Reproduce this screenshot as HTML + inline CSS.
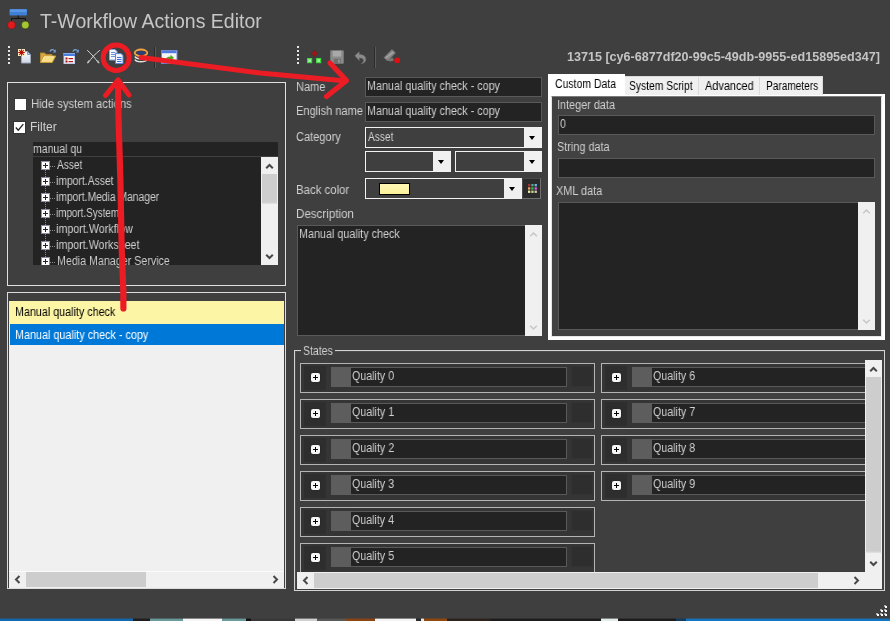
<!DOCTYPE html>
<html>
<head>
<meta charset="utf-8">
<title>T-Workflow Actions Editor</title>
<style>
html,body{margin:0;padding:0;}
body{width:890px;height:621px;overflow:hidden;background:#3f3f3f;font-family:"Liberation Sans",sans-serif;font-size:12px;color:#d0d0d0;position:relative;}
.a{position:absolute;box-sizing:border-box;}
.t{position:absolute;white-space:pre;line-height:14px;height:14px;transform-origin:0 0;will-change:transform;}
.inp{position:absolute;box-sizing:border-box;background:#232323;border:1px solid #595959;}
.cmb{position:absolute;box-sizing:border-box;background:#3f3f3f;border:1px solid #f2f2f2;}
.cmb .btn{position:absolute;right:0;top:0;bottom:0;width:17px;background:#f0f0f0;}
.cmb .btn:after{content:"";position:absolute;left:5px;top:8px;border-left:3.5px solid transparent;border-right:3.5px solid transparent;border-top:4px solid #000;}
.sb{position:absolute;box-sizing:border-box;background:#f0f0f0;}
.grip{width:2px;height:18px;background:repeating-linear-gradient(to bottom,#e6e6e6 0,#e6e6e6 2px,transparent 2px,transparent 4px);}
.st{position:absolute;box-sizing:border-box;border:1px solid #b4b4b4;height:30px;background:#353535;}
.st .pl{position:absolute;left:10px;top:9px;width:9px;height:9px;background:#f6f6f6;border-radius:2px;box-shadow:0 0 2px #222;}
.st .pl:before{content:"";position:absolute;left:2px;top:4px;width:5px;height:1px;background:#000;}
.st .pl:after{content:"";position:absolute;left:4px;top:2px;width:1px;height:5px;background:#000;}
.st:before{content:"";position:absolute;left:3px;top:2px;width:22px;height:24px;background:#2e2e2e;}
.st .sw{position:absolute;left:30px;top:3px;width:20px;height:20px;background:#5d5d5d;}
.st .tx{position:absolute;left:50px;top:3px;width:216px;height:20px;box-sizing:border-box;background:#232323;border:1px solid #595959;border-left:none;}
.st .dk{position:absolute;left:271px;top:3px;width:20px;height:19px;background:#2e2e2e;box-shadow:0 0 1px #2e2e2e;}
.tab{position:absolute;box-sizing:border-box;top:76px;height:19px;background:#f0f0f0;border:1px solid #dadada;border-bottom:none;}
.tr{position:absolute;left:0;height:16px;}
.tr .pm{position:absolute;left:8px;top:4px;width:9px;height:9px;box-sizing:border-box;background:#fff;border:1px solid #8a8fa6;}
.tr .pm:before{content:"";position:absolute;left:1px;top:3px;width:5px;height:1px;background:#223;}
.tr .pm:after{content:"";position:absolute;left:3px;top:1px;width:1px;height:5px;background:#223;}
.tr .dt{position:absolute;left:17px;top:9px;width:5px;height:1px;background:repeating-linear-gradient(to right,#8a8a8a 0,#8a8a8a 1px,transparent 1px,transparent 2px);}
</style>
</head>
<body>

<svg class="a" style="left:6px;top:6px" width="26" height="26" viewBox="0 0 26 26">
 <rect x="3.5" y="3" width="17.5" height="6.5" rx="1" fill="#3f7fd6"/>
 <rect x="4" y="3.5" width="16.500" height="2.500" fill="#5a97e6"/>
 <path d="M12.200 9.500v3M5.500 15v-2.500h14v2.500" stroke="#111" stroke-width="1" fill="none"/>
 <circle cx="5.500" cy="19" r="4" fill="#e01b1b" stroke="#5a1a1a" stroke-width="0.500"/>
 <circle cx="19.300" cy="19" r="4" fill="#a4c832" stroke="#2c3410" stroke-width="0.700"/>
</svg>
<div class="t" id="title" style="left:40px;top:9px;font-size:19.500px;line-height:24px;height:24px;color:#c6c6c6;">T-Workflow Actions Editor</div>
<!-- left toolbar -->
<div class="a grip" style="left:8px;top:46px;"></div>
<svg class="a" id="ic1" style="left:17px;top:48px" width="16" height="16" viewBox="0 0 16 16">
 <defs><linearGradient id="g1" x1="0" y1="0" x2="0" y2="1"><stop offset="0" stop-color="#ffffff"/><stop offset="1" stop-color="#cfd6e6"/></linearGradient></defs>
 <path d="M4.500 3.500h6l3 3v8.500h-9z" fill="url(#g1)" stroke="#9ea6b8" stroke-width="1"/>
 <path d="M10.500 3.500v3h3z" fill="#c9d6f2" stroke="#7f95c8" stroke-width="1"/>
 <rect x="1" y="1" width="7" height="7" fill="#fff0c4"/>
 <path d="M4.500 1.200v6.600M1.200 4.500h6.600M2.200 2.200l4.600 4.600M6.800 2.200l-4.600 4.600" stroke="#c41212" stroke-width="1.100"/>
 <circle cx="4.500" cy="4.500" r="1.600" fill="#b00c0c"/>
</svg>
<svg class="a" id="ic2" style="left:40px;top:48px" width="17" height="16" viewBox="0 0 17 16">
 <path d="M0.500 14.500v-9.500h4l1.500 1.500h6v8z" fill="#d6a842" stroke="#b58a2e"/>
 <path d="M0.700 14.500l3-6.500h12l-3.500 6.500z" fill="#f8dc84" stroke="#c99d36"/>
 <path d="M2 13.500l2.300-4.700h9.500" fill="none" stroke="#fff0b8" stroke-width="0.800"/>
 <path d="M9.800 3.500c1.400-2.300 3.600-2.300 5-0.500" stroke="#7fa6dc" stroke-width="1.200" fill="none"/>
 <path d="M15.800 1.200v3.200h-3z" fill="#6f9ad8"/>
</svg>
<svg class="a" id="ic3" style="left:63px;top:48px" width="17" height="16" viewBox="0 0 17 16">
 <rect x="1" y="5.500" width="10.500" height="10" fill="#fdf6f4" stroke="#c3cdea"/>
 <rect x="0.500" y="5" width="11.500" height="3" fill="#4a7fe0"/>
 <rect x="0.500" y="5" width="11.500" height="1" fill="#86a9ee"/>
 <rect x="2.500" y="9.500" width="2" height="2" fill="#a01010"/><rect x="5.500" y="10" width="4.500" height="1.200" fill="#b01818"/>
 <rect x="2.500" y="12.500" width="2" height="2" fill="#a01010"/><rect x="5.500" y="13" width="4.500" height="1.200" fill="#b01818"/>
 <path d="M9.800 3.500c1.400-2.300 3.600-2.300 5-0.500" stroke="#7fa6dc" stroke-width="1.200" fill="none"/>
 <path d="M15.800 1.200v3.200h-3z" fill="#6f9ad8"/>
</svg>
<svg class="a" id="ic4" style="left:86px;top:49px" width="16" height="16" viewBox="0 0 16 16">
 <path d="M1.500 1.500c3.500 3 7.500 7.500 11 12.500M13.500 1.500c-4 3-8 7.500-11.500 12.500" stroke="#d6d6d6" stroke-width="1" fill="none" stroke-linecap="round"/>
 <path d="M1.500 14l1.500-2.500M13 14l-1.500-2.500" stroke="#bdbdbd" stroke-width="1.400" fill="none"/>
</svg>
<svg class="a" id="ic5" style="left:108px;top:49px" width="17" height="16" viewBox="0 0 17 16">
 <path d="M1.500 0.500h5.500l2 2v8.500h-7.500z" fill="#f2f6ff" stroke="#8aa6e0"/>
 <path d="M3 3.500h4.500M3 5.500h4.500M3 7.500h4.500" stroke="#6e93dc" stroke-width="1"/>
 <path d="M7.500 4.500h5.500l2 2v8h-7.500z" fill="#eef3ff" stroke="#5f86d6"/>
 <path d="M9 8.500h4.500M9 10.500h4.500M9 12.500h4.500" stroke="#3f6fd6" stroke-width="1"/>
</svg>
<svg class="a" id="ic6" style="left:133px;top:48px" width="16" height="16" viewBox="0 0 16 16">
 <ellipse cx="8" cy="4.800" rx="6.300" ry="3.300" fill="none" stroke="#f0a24a" stroke-width="1.800"/>
 <ellipse cx="8" cy="5" rx="3.800" ry="1.400" fill="#2a3f86"/>
 <path d="M2 8.500c1 3 10.500 3 12 0" fill="none" stroke="#ececec" stroke-width="1.500"/>
 <path d="M2 11.500c1 3 10.500 3 12 0" fill="none" stroke="#e2e2e2" stroke-width="1.500"/>
</svg>
<div class="a" style="left:154px;top:47px;width:1px;height:21px;background:#2b2b2b;"></div>
<div class="a" style="left:155px;top:47px;width:1px;height:21px;background:#5a5a5a;"></div>
<svg class="a" id="ic7" style="left:161px;top:50px" width="17" height="14" viewBox="0 0 17 14">
 <rect x="0.500" y="0.500" width="15.500" height="13" fill="#f4f4f4" stroke="#6f86d6"/>
 <rect x="1" y="1" width="14.500" height="2.200" fill="#4f7be0"/>
 <path d="M5 9.500c0-2 2-3 4.500-3v-1.800l3.500 3-3.500 3v-1.800c-1.500 0-2.500 0.300-3 1.600z" fill="#4fa81e"/>
</svg>

<!-- right toolbar -->
<div class="a grip" style="left:297px;top:46px;"></div>
<svg class="a" id="ir1" style="left:306px;top:49px" width="17" height="17" viewBox="0 0 17 17">
 <path d="M8.300 1.500v6M5.300 4.500h6" stroke="#8f1010" stroke-width="2"/>
 <path d="M8.300 2.500v4M6.300 4.500h4" stroke="#b01515" stroke-width="1"/>
 <rect x="1" y="9" width="5.200" height="5.200" fill="#3fd83f"/>
 <rect x="10" y="9" width="5.200" height="5.200" fill="#3fd83f"/>
 <rect x="2.200" y="10.200" width="2.800" height="2.800" fill="#9df09d"/>
 <rect x="11.200" y="10.200" width="2.800" height="2.800" fill="#9df09d"/>
</svg>
<svg class="a" id="ir2" style="left:330px;top:50px" width="14" height="14" viewBox="0 0 15 15">
 <rect x="0.500" y="0.500" width="14" height="14" rx="1" fill="#8a8a8a" stroke="#777"/>
 <rect x="3" y="1" width="9" height="6" fill="#a9a9a9"/>
 <rect x="4" y="9.500" width="7.500" height="5" fill="#707070"/>
 <rect x="8.500" y="10.500" width="2" height="3" fill="#9a9a9a"/>
</svg>
<svg class="a" id="ir3" style="left:354px;top:51px" width="13" height="13" viewBox="0 0 15 15">
 <path d="M1 5.500l5-4.500v3c5 0 8 2.500 7.500 6.500c-0.500 2.500-2.500 4-5 4c2-1 2.800-2.300 2.500-4c-0.300-1.800-2-2.600-5-2.600v3z" fill="#8c8c8c" stroke="#777" stroke-width="0.600"/>
</svg>
<div class="a" style="left:374px;top:47px;width:1px;height:21px;background:#2b2b2b;"></div>
<div class="a" style="left:375px;top:47px;width:1px;height:21px;background:#5a5a5a;"></div>
<svg class="a" id="ir4" style="left:383px;top:48px" width="19" height="17" viewBox="0 0 19 17">
 <path d="M1 9.500l8-8l3.500 3.500l-8 8z" fill="#8a8a8a" stroke="#6f6f6f" stroke-width="0.700"/>
 <path d="M4 12l3 1.500l4-1l-1.500-3z" fill="#777"/>
 <path d="M2.500 10l8-6" stroke="#b0b0b0" stroke-width="1"/>
 <circle cx="14.200" cy="12.300" r="2.900" fill="#e01010"/>
</svg>
<div class="t" style="left:566.8px;top:50.3px;color:#c4c4c4;transform:scaleX(1.047);font-weight:bold;">13715 [cy6-6877df20-99c5-49db-9955-ed15895ed347]</div>

<div class="a" style="left:7px;top:82px;width:279px;height:204px;border:1px solid #e0e0e0;"></div>
<div class="a" style="left:14px;top:98px;width:13px;height:13px;background:#fff;border:1px solid #3a3a3a;"></div>
<div class="a" style="left:13px;top:121px;width:13px;height:13px;background:#fff;border:1px solid #333;"></div>
<svg class="a" style="left:13px;top:121px" width="13" height="13" viewBox="0 0 13 13"><path d="M2.800 6.500l2.500 2.700l5-6" fill="none" stroke="#222" stroke-width="1.300"/></svg>
<div class="a" style="left:33px;top:142px;width:245px;height:14px;background:#232323;"></div>
<div class="t" style="left:30.9px;top:96.8px;color:#d0d0d0;transform:scaleX(0.938);">Hide system actions</div>
<div class="t" style="left:29.8px;top:119.7px;color:#d0d0d0;transform:scaleX(0.989);">Filter</div>
<div class="t" style="left:33.0px;top:141.8px;color:#d0d0d0;transform:scaleX(0.876);">manual qu</div>
<div class="a" id="tree" style="left:33px;top:157px;width:245px;height:108px;background:#232323;overflow:hidden;">
 <div class="a" style="left:12px;top:9px;width:1px;height:100px;background:repeating-linear-gradient(to bottom,#8a8a8a 0,#8a8a8a 1px,transparent 1px,transparent 2px);"></div> <div class="tr" style="top:0px"><i class="dt"></i><i class="pm"></i></div> <div class="tr" style="top:16px"><i class="dt"></i><i class="pm"></i></div> <div class="tr" style="top:32px"><i class="dt"></i><i class="pm"></i></div> <div class="tr" style="top:48px"><i class="dt"></i><i class="pm"></i></div> <div class="tr" style="top:64px"><i class="dt"></i><i class="pm"></i></div> <div class="tr" style="top:80px"><i class="dt"></i><i class="pm"></i></div> <div class="tr" style="top:96px"><i class="dt"></i><i class="pm"></i></div><div class="sb" style="left:228px;top:0px;width:17px;height:108px;"><svg class="a" style="left:4.0px;top:6px" width="9" height="7" viewBox="0 0 9 7"><path d="M1.200 5.300l3.300-3.300l3.300 3.300" fill="none" stroke="#484848" stroke-width="2"/></svg><div class="a" style="left:1px;top:17px;width:15px;height:30px;background:linear-gradient(to bottom,#cdcdcd 0,#cdcdcd 28px,#e4e4e4 30px);"></div><svg class="a" style="left:4.0px;top:96px" width="9" height="7" viewBox="0 0 9 7"><path d="M1.200 1.700l3.300 3.300l3.300-3.300" fill="none" stroke="#484848" stroke-width="2"/></svg></div>
</div><div class="t" style="left:57.2px;top:158.0px;color:#d0d0d0;transform:scaleX(0.841);">Asset</div>
<div class="t" style="left:56.1px;top:174.0px;color:#d0d0d0;transform:scaleX(0.863);">import.Asset</div>
<div class="t" style="left:56.1px;top:190.0px;color:#d0d0d0;transform:scaleX(0.859);">import.Media Manager</div>
<div class="t" style="left:56.1px;top:206.0px;color:#d0d0d0;transform:scaleX(0.822);">import.System</div>
<div class="t" style="left:56.1px;top:222.0px;color:#d0d0d0;transform:scaleX(0.894);">import.Workflow</div>
<div class="t" style="left:56.1px;top:238.0px;color:#d0d0d0;transform:scaleX(0.889);">import.Worksheet</div>
<div class="t" style="left:56.8px;top:254.0px;color:#d0d0d0;transform:scaleX(0.890);">Media Manager Service</div>

<div class="a" id="list" style="left:7px;top:292px;width:279px;height:297px;border:1px solid #dcdcdc;"></div>
<div class="a" style="left:9px;top:301px;width:275px;height:287px;background:#f0f0f0;"></div>
<div class="a" style="left:9px;top:301px;width:275px;height:23px;background:#fdf5a6;"></div>
<div class="a" style="left:10px;top:324px;width:274px;height:21px;background:#0078d7;"></div>
<div class="sb" style="left:9px;top:571px;width:275px;height:17px;border-top:1px solid #fbfbfb;"><svg class="a" style="left:5px;top:3px" width="7" height="9" viewBox="0 0 7 9"><path d="M5.500 1l-3.500 3.500l3.500 3.500" fill="none" stroke="#484848" stroke-width="2"/></svg><div class="a" style="left:17px;top:0px;width:120px;height:15px;background:#cdcdcd;"></div><svg class="a" style="left:263px;top:3px" width="7" height="9" viewBox="0 0 7 9"><path d="M1.500 1l3.500 3.500l-3.500 3.500" fill="none" stroke="#484848" stroke-width="2"/></svg></div>
<div class="t" style="left:15.1px;top:305.0px;color:#000;transform:scaleX(0.895);">Manual quality check</div>
<div class="t" style="left:15.1px;top:328.0px;color:#fff;transform:scaleX(0.900);">Manual quality check - copy</div>

<div class="inp" style="left:365px;top:77px;width:177px;height:20px;"></div>
<div class="inp" style="left:365px;top:102px;width:177px;height:20px;"></div>
<div class="cmb" style="left:365px;top:127px;width:177px;height:21px;"><div class="btn"></div></div>
<div class="cmb" style="left:365px;top:151px;width:86px;height:21px;"><div class="btn"></div></div>
<div class="cmb" style="left:455px;top:151px;width:87px;height:21px;"><div class="btn"></div></div>
<div class="cmb" style="left:365px;top:178px;width:157px;height:21px;"><div class="btn"></div>
 <div class="a" style="left:13px;top:4px;width:31px;height:12px;background:linear-gradient(to bottom,#fdf7b4,#fbf29a);border:1px solid #000;"></div></div>
<div class="a" style="left:522px;top:178px;width:19px;height:21px;background:#2b2b2b;border:1px solid #4a4a4a;border-right-color:#707070;border-bottom-color:#707070;">
 <svg class="a" style="left:5px;top:5px" width="9" height="9" viewBox="0 0 9 9">
  <rect x="0" y="0" width="2.300" height="2.300" fill="#a83232"/><rect x="3.300" y="0" width="2.300" height="2.300" fill="#40b090"/><rect x="6.600" y="0" width="2.300" height="2.300" fill="#70b8e8"/>
  <rect x="0" y="3.300" width="2.300" height="2.300" fill="#f0a060"/><rect x="3.300" y="3.300" width="2.300" height="2.300" fill="#30c040"/><rect x="6.600" y="3.300" width="2.300" height="2.300" fill="#e060e0"/>
  <rect x="0" y="6.600" width="2.300" height="2.300" fill="#f0f0a0"/><rect x="3.300" y="6.600" width="2.300" height="2.300" fill="#c0e0a0"/><rect x="6.600" y="6.600" width="2.300" height="2.300" fill="#e8c8b8"/>
 </svg></div>
<div class="inp" style="left:297px;top:225px;width:245px;height:111px;"></div>
<div class="sb" style="left:525px;top:225px;width:17px;height:111px;"><svg class="a" style="left:4.0px;top:6px" width="9" height="7" viewBox="0 0 9 7"><path d="M1.200 5.300l3.300-3.300l3.300 3.300" fill="none" stroke="#c6c6c6" stroke-width="1.500"/></svg><svg class="a" style="left:4.0px;top:99px" width="9" height="7" viewBox="0 0 9 7"><path d="M1.200 1.700l3.300 3.300l3.300-3.300" fill="none" stroke="#c6c6c6" stroke-width="1.500"/></svg></div>
<div class="t" style="left:296.1px;top:79.7px;color:#d0d0d0;transform:scaleX(0.920);">Name</div>
<div class="t" style="left:296.1px;top:104.4px;color:#d0d0d0;transform:scaleX(0.921);">English name</div>
<div class="t" style="left:295.9px;top:129.9px;color:#d0d0d0;transform:scaleX(0.919);">Category</div>
<div class="t" style="left:295.8px;top:183.3px;color:#d0d0d0;transform:scaleX(0.950);">Back color</div>
<div class="t" style="left:295.8px;top:207.2px;color:#d0d0d0;transform:scaleX(0.965);">Description</div>
<div class="t" style="left:366.6px;top:78.5px;color:#d0d0d0;transform:scaleX(0.898);">Manual quality check - copy</div>
<div class="t" style="left:366.6px;top:103.5px;color:#d0d0d0;transform:scaleX(0.898);">Manual quality check - copy</div>
<div class="t" style="left:368.1px;top:129.8px;color:#d0d0d0;transform:scaleX(0.844);">Asset</div>
<div class="t" style="left:298.5px;top:227.2px;color:#d0d0d0;transform:scaleX(0.899);">Manual quality check</div>

<div class="a" style="left:548px;top:94px;width:337px;height:246px;border:3px solid #fff;border-top-width:2px;"></div>
<div class="a" style="left:551px;top:96px;width:331px;height:241px;border:1px solid #e6e6e6;border-top-color:#7c7c7c;background:#424242;"></div>
<div class="tab" style="left:624px;width:75px;"></div>
<div class="tab" style="left:698px;width:62px;"></div>
<div class="tab" style="left:759px;width:64px;"></div>
<div class="a" style="left:548px;top:74px;width:77px;height:22px;background:#fff;"></div>
<div class="inp" style="left:558px;top:115px;width:317px;height:20px;"></div>
<div class="inp" style="left:558px;top:158px;width:317px;height:20px;"></div>
<div class="inp" style="left:558px;top:202px;width:317px;height:128px;"></div>
<div class="sb" style="left:858px;top:202px;width:17px;height:128px;"><svg class="a" style="left:4.0px;top:6px" width="9" height="7" viewBox="0 0 9 7"><path d="M1.200 5.300l3.300-3.300l3.300 3.300" fill="none" stroke="#c6c6c6" stroke-width="1.500"/></svg><svg class="a" style="left:4.0px;top:116px" width="9" height="7" viewBox="0 0 9 7"><path d="M1.200 1.700l3.300 3.300l3.300-3.300" fill="none" stroke="#c6c6c6" stroke-width="1.500"/></svg></div>
<div class="t" style="left:555.3px;top:76.7px;color:#000;transform:scaleX(0.873);">Custom Data</div>
<div class="t" style="left:629.0px;top:78.7px;color:#000;transform:scaleX(0.859);">System Script</div>
<div class="t" style="left:705.3px;top:78.7px;color:#000;transform:scaleX(0.911);">Advanced</div>
<div class="t" style="left:766.1px;top:78.7px;color:#000;transform:scaleX(0.842);">Parameters</div>
<div class="t" style="left:556.6px;top:97.6px;color:#d0d0d0;transform:scaleX(0.905);">Integer data</div>
<div class="t" style="left:559.9px;top:116.8px;color:#d0d0d0;transform:scaleX(0.885);">0</div>
<div class="t" style="left:557.1px;top:140.2px;color:#d0d0d0;transform:scaleX(0.907);">String data</div>
<div class="t" style="left:556.3px;top:184.1px;color:#d0d0d0;transform:scaleX(0.908);">XML data</div>

<div class="a" style="left:294px;top:350px;width:591px;height:241px;border:1px solid #d4d4d4;"></div>
<div class="a" style="left:295px;top:351px;width:589px;height:238px;border:1px solid #4c4c4c;border-right:none;border-bottom:none;"></div>
<div class="a" style="left:301px;top:349px;width:34px;height:4px;background:#3f3f3f;"></div>
<div class="a" id="stwrap" style="left:297px;top:360px;width:568px;height:212px;overflow:hidden;">
 <div class="st" style="left:3px;top:3px;width:295px;"><i class="pl"></i><i class="sw"></i><i class="tx"></i><i class="dk"></i></div> <div class="st" style="left:3px;top:39px;width:295px;"><i class="pl"></i><i class="sw"></i><i class="tx"></i><i class="dk"></i></div> <div class="st" style="left:3px;top:75px;width:295px;"><i class="pl"></i><i class="sw"></i><i class="tx"></i><i class="dk"></i></div> <div class="st" style="left:3px;top:111px;width:295px;"><i class="pl"></i><i class="sw"></i><i class="tx"></i><i class="dk"></i></div> <div class="st" style="left:3px;top:147px;width:295px;"><i class="pl"></i><i class="sw"></i><i class="tx"></i><i class="dk"></i></div> <div class="st" style="left:3px;top:183px;width:295px;"><i class="pl"></i><i class="sw"></i><i class="tx"></i><i class="dk"></i></div> <div class="st" style="left:304px;top:3px;width:295px;"><i class="pl"></i><i class="sw"></i><i class="tx"></i><i class="dk"></i></div> <div class="st" style="left:304px;top:39px;width:295px;"><i class="pl"></i><i class="sw"></i><i class="tx"></i><i class="dk"></i></div> <div class="st" style="left:304px;top:75px;width:295px;"><i class="pl"></i><i class="sw"></i><i class="tx"></i><i class="dk"></i></div> <div class="st" style="left:304px;top:111px;width:295px;"><i class="pl"></i><i class="sw"></i><i class="tx"></i><i class="dk"></i></div></div><div class="t" style="left:303.0px;top:343.5px;color:#d0d0d0;transform:scaleX(0.876);">States</div>
<div class="t" style="left:351.5px;top:368.7px;color:#d0d0d0;transform:scaleX(0.889);">Quality 0</div>
<div class="t" style="left:351.5px;top:404.7px;color:#d0d0d0;transform:scaleX(0.892);">Quality 1</div>
<div class="t" style="left:351.5px;top:440.7px;color:#d0d0d0;transform:scaleX(0.892);">Quality 2</div>
<div class="t" style="left:351.5px;top:476.7px;color:#d0d0d0;transform:scaleX(0.890);">Quality 3</div>
<div class="t" style="left:351.5px;top:512.7px;color:#d0d0d0;transform:scaleX(0.887);">Quality 4</div>
<div class="t" style="left:351.5px;top:548.7px;color:#d0d0d0;transform:scaleX(0.890);">Quality 5</div>
<div class="t" style="left:652.5px;top:368.7px;color:#d0d0d0;transform:scaleX(0.890);">Quality 6</div>
<div class="t" style="left:652.5px;top:404.7px;color:#d0d0d0;transform:scaleX(0.892);">Quality 7</div>
<div class="t" style="left:652.5px;top:440.7px;color:#d0d0d0;transform:scaleX(0.890);">Quality 8</div>
<div class="t" style="left:652.5px;top:476.7px;color:#d0d0d0;transform:scaleX(0.890);">Quality 9</div>

<div class="sb" style="left:865px;top:360px;width:17px;height:212px;"><svg class="a" style="left:4.0px;top:6px" width="9" height="7" viewBox="0 0 9 7"><path d="M1.200 5.300l3.300-3.300l3.300 3.300" fill="none" stroke="#484848" stroke-width="2"/></svg><div class="a" style="left:1px;top:17px;width:15px;height:176px;background:linear-gradient(to bottom,#cdcdcd 0,#cdcdcd 174px,#e4e4e4 176px);"></div><svg class="a" style="left:4.0px;top:200px" width="9" height="7" viewBox="0 0 9 7"><path d="M1.200 1.700l3.300 3.300l3.300-3.300" fill="none" stroke="#484848" stroke-width="2"/></svg></div><div class="sb" style="left:297px;top:572px;width:568px;height:17px;"><svg class="a" style="left:5px;top:4px" width="7" height="9" viewBox="0 0 7 9"><path d="M5.500 1l-3.500 3.500l3.500 3.500" fill="none" stroke="#484848" stroke-width="2"/></svg><div class="a" style="left:17px;top:1px;width:504px;height:15px;background:#cdcdcd;"></div><svg class="a" style="left:556px;top:4px" width="7" height="9" viewBox="0 0 7 9"><path d="M1.500 1l3.500 3.500l-3.500 3.500" fill="none" stroke="#484848" stroke-width="2"/></svg></div><div class="sb" style="left:865px;top:572px;width:17px;height:17px;"></div>

<svg class="a" style="left:876px;top:605px" width="12" height="12" viewBox="0 0 12 12"><rect x="8" y="0" width="2" height="2" fill="#a8a8a8"/><rect x="9" y="1" width="2" height="2" fill="#fcfcfc"/><rect x="4" y="4" width="2" height="2" fill="#a8a8a8"/><rect x="5" y="5" width="2" height="2" fill="#fcfcfc"/><rect x="8" y="4" width="2" height="2" fill="#a8a8a8"/><rect x="9" y="5" width="2" height="2" fill="#fcfcfc"/><rect x="0" y="8" width="2" height="2" fill="#a8a8a8"/><rect x="1" y="9" width="2" height="2" fill="#fcfcfc"/><rect x="4" y="8" width="2" height="2" fill="#a8a8a8"/><rect x="5" y="9" width="2" height="2" fill="#fcfcfc"/><rect x="8" y="8" width="2" height="2" fill="#a8a8a8"/><rect x="9" y="9" width="2" height="2" fill="#fcfcfc"/></svg>
<div class="a" style="left:0;top:618px;width:890px;height:1px;opacity:.4;background:linear-gradient(to right,#1268ae 0px,#1268ae 133px,#1d1d1d 133px,#1d1d1d 150px,#6a9a9c 150px,#6a9a9c 183px,#f6f6f6 183px,#f6f6f6 222px,#6a9a9c 222px,#6a9a9c 246px,#101010 246px,#101010 251px,#383838 251px,#383838 295px,#d0d0d0 295px,#d0d0d0 317px,#585858 317px,#585858 346px,#8c4512 346px,#8c4512 375px,#f4f4f4 375px,#f4f4f4 416px,#2a2a2a 416px,#2a2a2a 421px,#e8e8e8 421px,#e8e8e8 424px,#90480f 424px,#90480f 447px,#2c211b 447px,#2c211b 490px,#1c1c1c 490px,#1c1c1c 601px,#e4ecec 601px,#e4ecec 618px,#1c1c1c 618px,#1c1c1c 676px,#123c60 676px,#123c60 686px,#1476c0 686px,#1476c0 890px);"></div>
<div class="a" style="left:0;top:619px;width:890px;height:2px;background:linear-gradient(to right,#1268ae 0px,#1268ae 133px,#1d1d1d 133px,#1d1d1d 150px,#6a9a9c 150px,#6a9a9c 183px,#f6f6f6 183px,#f6f6f6 222px,#6a9a9c 222px,#6a9a9c 246px,#101010 246px,#101010 251px,#383838 251px,#383838 295px,#d0d0d0 295px,#d0d0d0 317px,#585858 317px,#585858 346px,#8c4512 346px,#8c4512 375px,#f4f4f4 375px,#f4f4f4 416px,#2a2a2a 416px,#2a2a2a 421px,#e8e8e8 421px,#e8e8e8 424px,#90480f 424px,#90480f 447px,#2c211b 447px,#2c211b 490px,#1c1c1c 490px,#1c1c1c 601px,#e4ecec 601px,#e4ecec 618px,#1c1c1c 618px,#1c1c1c 676px,#123c60 676px,#123c60 686px,#1476c0 686px,#1476c0 890px);"></div>

<svg class="a" style="left:0;top:0;" width="890" height="621" viewBox="0 0 890 621" fill="none" stroke="#ec1c24" stroke-linecap="round" stroke-linejoin="round">
 <ellipse cx="116.200" cy="57.700" rx="13" ry="12.800" stroke-width="5"/>
 <path d="M123.400 308.500L123.300 290L121.700 249L120.400 181L118.400 114L118 81" stroke-width="6.200"/>
 <path d="M105.500 95.500L118 80L129 95" stroke-width="5"/>
 <path d="M141 57.500L260 73L346 81" stroke-width="5"/>
 <path d="M330 63L346.500 80.500L326.500 96.500" stroke-width="5.200"/>
</svg>

</body>
</html>
